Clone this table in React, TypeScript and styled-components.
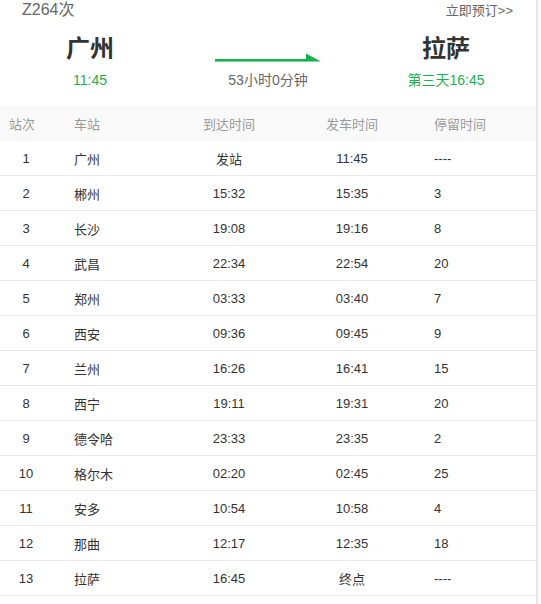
import React, { FunctionComponent } from 'react';
import styled, { createGlobalStyle } from 'styled-components';

const GlobalStyle = createGlobalStyle`
  body {
    margin: 0;
    background: #fff;
    font-family: 'Liberation Sans', 'Noto Sans CJK SC', sans-serif;
    color: #333;
  }
`;

const GREEN = '#19b14f';

const Page = styled.div`
  width: 536px;
  min-height: 604px;
  border-right: 2px solid #e8e8e8;
`;

const TopBar = styled.div`
  display: flex;
  justify-content: space-between;
  align-items: baseline;
  height: 20px;
  padding: 0 23px 0 22px;
`;

const TrainNo = styled.span`
  font-size: 16px;
  line-height: 20px;
  color: #666;
`;

const BookLink = styled.a`
  font-size: 13px;
  line-height: 20px;
  color: #666;
  text-decoration: none;
`;

const Stations = styled.div`
  display: flex;
  padding: 14px 1px 16px;
`;

const StationCol = styled.div`
  flex: 1;
  display: flex;
  flex-direction: column;
  align-items: center;
`;

const StationName = styled.div`
  font-size: 24px;
  line-height: 30px;
  height: 30px;
  font-weight: bold;
  color: #333;
`;

const ArrowBox = styled.div`
  height: 30px;
  display: flex;
  align-items: flex-end;
  padding-bottom: 2px;
  box-sizing: border-box;
`;

const SubText = styled.div<{ $green?: boolean }>`
  margin-top: 6px;
  font-size: 14px;
  line-height: 20px;
  color: ${(p) => (p.$green ? GREEN : '#666')};
`;

const Row = styled.div<{ $head?: boolean }>`
  display: grid;
  grid-template-columns: 52px 112px 130px 116px 1fr;
  align-items: center;
  height: ${(p) => (p.$head ? '35px' : '34px')};
  background: ${(p) => (p.$head ? '#f9f9f9' : '#fff')};
  border-bottom: ${(p) => (p.$head ? 'none' : '1px solid #e8e8e8')};
  font-size: 13px;
  color: ${(p) => (p.$head ? '#999' : '#333')};

  & > :nth-child(1) {
    text-align: ${(p) => (p.$head ? 'left' : 'center')};
    padding-left: ${(p) => (p.$head ? '9px' : '0')};
  }
  & > :nth-child(2) {
    padding-left: 22px;
  }
  & > :nth-child(3),
  & > :nth-child(4) {
    text-align: center;
  }
  & > :nth-child(5) {
    padding-left: 24px;
  }
`;

const Cell = styled.div`
  white-space: nowrap;
`;

const stops: [string, string, string, string, string][] = [
  ['1', '广州', '发站', '11:45', '----'],
  ['2', '郴州', '15:32', '15:35', '3'],
  ['3', '长沙', '19:08', '19:16', '8'],
  ['4', '武昌', '22:34', '22:54', '20'],
  ['5', '郑州', '03:33', '03:40', '7'],
  ['6', '西安', '09:36', '09:45', '9'],
  ['7', '兰州', '16:26', '16:41', '15'],
  ['8', '西宁', '19:11', '19:31', '20'],
  ['9', '德令哈', '23:33', '23:35', '2'],
  ['10', '格尔木', '02:20', '02:45', '25'],
  ['11', '安多', '10:54', '10:58', '4'],
  ['12', '那曲', '12:17', '12:35', '18'],
  ['13', '拉萨', '16:45', '终点', '----'],
];

const Arrow: FunctionComponent = () => (
  <svg width="106" height="10" viewBox="0 0 106 10">
    <rect x="0" y="7" width="92" height="2.6" fill={GREEN} />
    <polygon points="91,1.5 106,9.6 91,9.6" fill={GREEN} />
  </svg>
);

export default function App() {
  return (
    <Page>
      <GlobalStyle />
      <TopBar>
        <TrainNo>Z264次</TrainNo>
        <BookLink href="#">立即预订&gt;&gt;</BookLink>
      </TopBar>
      <Stations>
        <StationCol>
          <StationName>广州</StationName>
          <SubText $green>11:45</SubText>
        </StationCol>
        <StationCol>
          <ArrowBox>
            <Arrow />
          </ArrowBox>
          <SubText>53小时0分钟</SubText>
        </StationCol>
        <StationCol>
          <StationName>拉萨</StationName>
          <SubText $green>第三天16:45</SubText>
        </StationCol>
      </Stations>
      <Row $head>
        <Cell>站次</Cell>
        <Cell>车站</Cell>
        <Cell>到达时间</Cell>
        <Cell>发车时间</Cell>
        <Cell>停留时间</Cell>
      </Row>
      {stops.map((s) => (
        <Row key={s[0]}>
          {s.map((v, i) => (
            <Cell key={i}>{v}</Cell>
          ))}
        </Row>
      ))}
    </Page>
  );
}
